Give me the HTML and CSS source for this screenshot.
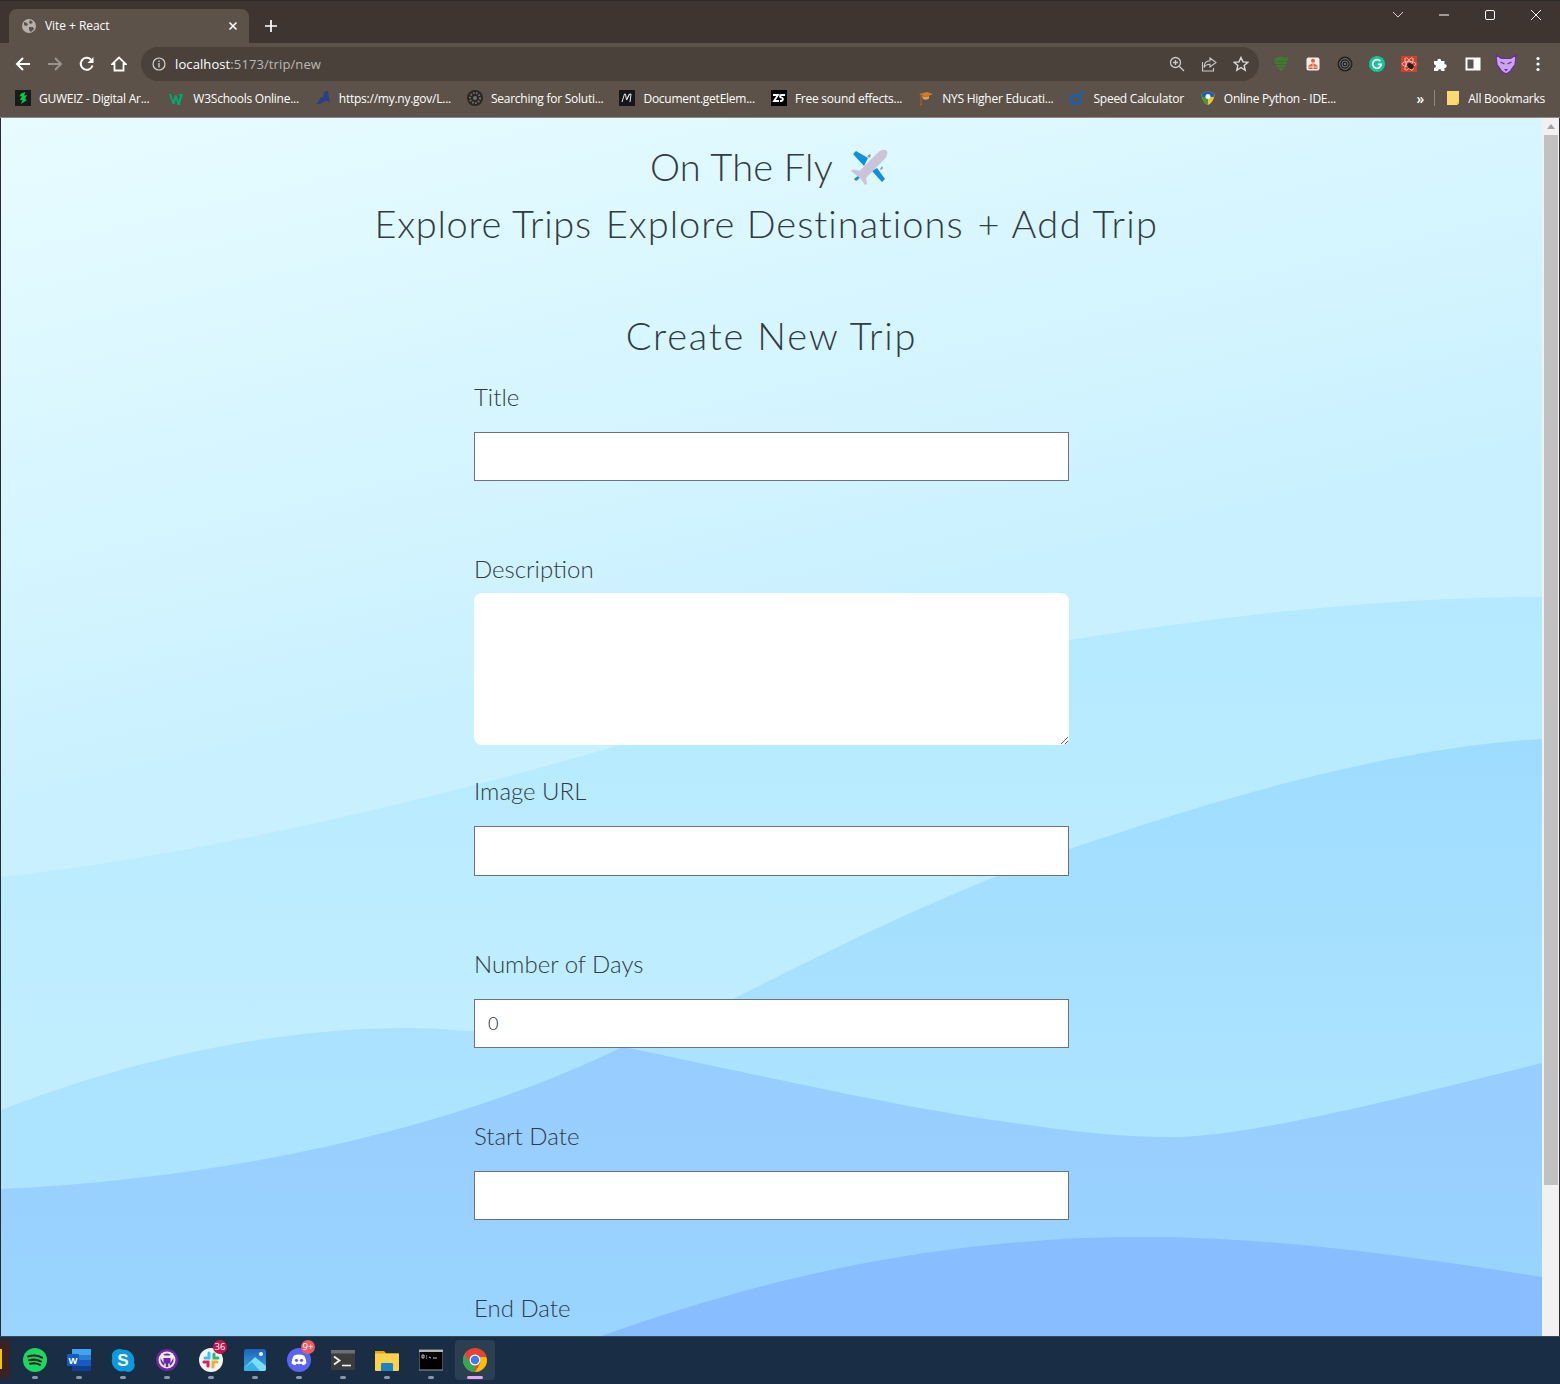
FILE: index.html
```html
<!DOCTYPE html>
<html>
    <head>
        <meta charset="utf-8"/>
        <title>Vite + React</title>
        <link rel="stylesheet" href="styles.css">
    </head>
    <body>
        <div class="window">
          <div class="titlebar">
            <div class="tab">
              <svg class="tab-icon" viewBox="0 0 14 14"><circle cx="7" cy="7" r="7" fill="#b5b0ab"/><path d="M2 3l3 1 1 2-2 1-2-1zM8 1l3 2-2 2-2-1zM7 8l4 0 1 2-3 3-2-2z" fill="#5c5249"/></svg>
              <span class="tab-title">Vite + React</span>
              <svg class="tab-close" viewBox="0 0 10 10"><path d="M1.5 1.5l7 7M8.5 1.5l-7 7" stroke="#fff" stroke-width="1.6"/></svg>
            </div>
            <svg class="new-tab" viewBox="0 0 12 12"><path d="M6 0v12M0 6h12" stroke="#fff" stroke-width="1.7"/></svg>
            <div class="window-controls">
              <svg class="win-btn win-chevron" viewBox="0 0 12 12"><path d="M1 3l5 5 5-5" fill="none" stroke="#d5d2cf" stroke-width="1"/></svg>
              <svg class="win-btn win-min" viewBox="0 0 12 12"><path d="M1 6h10" stroke="#fff" stroke-width="1"/></svg>
              <svg class="win-btn win-max" viewBox="0 0 12 12"><rect x="1.5" y="1.5" width="9" height="9" rx="1.5" fill="none" stroke="#fff"/></svg>
              <svg class="win-btn win-close" viewBox="0 0 12 12"><path d="M1 1l10 10M11 1L1 11" stroke="#fff" stroke-width="1"/></svg>
            </div>
          </div>

          <div class="toolbar">
            <svg class="nav-icon" viewBox="0 0 16 16"><path d="M15 8H2M8 2L2 8l6 6" fill="none" stroke="#fff" stroke-width="2"/></svg>
            <svg class="nav-icon" viewBox="0 0 16 16"><path d="M1 8h13M8 2l6 6-6 6" fill="none" stroke="#9a948e" stroke-width="2"/></svg>
            <svg class="nav-icon" viewBox="0 0 16 16"><path d="M13.5 9.5A6 6 0 1 1 12 3.6" fill="none" stroke="#fff" stroke-width="2"/><path d="M14.5 1v6h-6z" fill="#fff"/></svg>
            <svg class="nav-icon" viewBox="0 0 16 16"><path d="M8 1.5L1.2 8H3.5v6.5h9V8h2.3z" fill="none" stroke="#fff" stroke-width="1.8" stroke-linejoin="miter"/></svg>
            <div class="omnibox">
              <svg class="info-icon" viewBox="0 0 14 14"><circle cx="7" cy="7" r="6" fill="none" stroke="#d8d5d2" stroke-width="1.2"/><path d="M7 6v4.5M7 3.4v1.5" stroke="#d8d5d2" stroke-width="1.3"/></svg>
              <span class="url"><span class="url-host">localhost</span>:5173/trip/new</span>
              <svg class="omni-icon" viewBox="0 0 16 16"><circle cx="6.5" cy="6.5" r="5" fill="none" stroke="#cfcac6" stroke-width="1.3"/><path d="M10.2 10.2L15 15M4 6.5h5M6.5 4v5" stroke="#cfcac6" stroke-width="1.3"/></svg>
              <svg class="omni-icon" viewBox="0 0 16 16"><path d="M9 2l6 4.5L9 11V8.2C6 8.2 4 9.300 3 11.500 3 7.500 5 5 9 4.800z" fill="none" stroke="#cfcac6" stroke-width="1.1"/><path d="M1.500 6v9h11v-3" fill="none" stroke="#cfcac6" stroke-width="1.100"/></svg>
              <svg class="omni-icon" viewBox="0 0 16 16"><path d="M8 1.500l2 4.400 4.700.5-3.500 3.200 1 4.700L8 11.500l-4.200 2.800 1-4.700L1.300 6.400 6 5.900z" fill="none" stroke="#dedad7" stroke-width="1.400"/></svg>
            </div>
            <div class="extensions">
              <svg class="ext" viewBox="0 0 16 16"><path d="M1 2c4-1.500 10-1.500 14 0-.5 6-3 10.500-7 13C4 12.500 1.500 8 1 2z" fill="#3f7a2e"/><path d="M1 5.500h14M2 8.500h12M3.500 11.500h9" stroke="#5c5249" stroke-width=".8"/></svg>
              <svg class="ext" viewBox="0 0 16 16"><rect x="1.500" y="1.500" width="13" height="13" rx="2" fill="#f5efea"/><circle cx="8" cy="4.800" r="2" fill="#e8603c"/><path d="M3.500 13V9.500L8 7l4.500 2.500V13z" fill="#e8603c"/><path d="M8 7v6M3.500 11h9" stroke="#f5efea" stroke-width=".8"/></svg>
              <svg class="ext" viewBox="0 0 16 16"><circle cx="8" cy="8" r="7.500" fill="#222"/><circle cx="8" cy="8" r="5.300" fill="none" stroke="#8a8a8a" stroke-width=".8"/><circle cx="8" cy="8" r="3" fill="none" stroke="#8a8a8a" stroke-width=".8"/><circle cx="8" cy="8" r="1" fill="#8a8a8a"/></svg>
              <svg class="ext" viewBox="0 0 16 16"><circle cx="8" cy="8" r="8" fill="#15c39a"/><path d="M11.300 5.200A4.300 4.300 0 1 0 12.300 8.300H8.800" fill="none" stroke="#fff" stroke-width="1.700"/></svg>
              <svg class="ext" viewBox="0 0 16 16"><rect width="16" height="16" fill="#d0402f"/><ellipse cx="8" cy="8" rx="7" ry="2.500" fill="none" stroke="#f5c9c0" stroke-width=".8" transform="rotate(60 8 8)"/><ellipse cx="8" cy="8" rx="7" ry="2.500" fill="none" stroke="#f5c9c0" stroke-width=".8" transform="rotate(-60 8 8)"/><ellipse cx="8" cy="8" rx="7" ry="2.500" fill="none" stroke="#f5c9c0" stroke-width=".8"/><ellipse cx="9.500" cy="10" rx="3.500" ry="2.600" fill="#2b1c18" transform="rotate(35 9.500 10)"/></svg>
              <svg class="ext" viewBox="0 0 16 16"><path d="M1 5h3.500c-.8-3 4.300-3 3.500 0H11.500v3.400c3-.8 3 4.300 0 3.500V15H8.300c.8-2.500-3.900-2.500-3.100 0H1v-3.300c2.500.8 2.500-3.900 0-3.100z" fill="#fff"/></svg>
              <svg class="ext" viewBox="0 0 16 16"><rect x=".500" y="1.500" width="15" height="13" fill="#fff"/><rect x="2.500" y="3.500" width="6" height="9" fill="#5c5249"/></svg>
              <svg class="ext ext-wolf" viewBox="0 0 22 22"><path d="M1 2l5.500 3.500h9L21 2l-1 9.500-5 7-4 2.500-4-2.500-5-7z" fill="#c9a6ea" stroke="#6a2aa8" stroke-width="1.200" stroke-linejoin="round"/><path d="M5.500 9l4 2M16.500 9l-4 2" stroke="#6a2aa8" stroke-width="1.300"/><path d="M9 16h4l-2 2.500z" fill="#6a2aa8"/></svg>
              <svg class="ext" viewBox="0 0 16 16"><circle cx="8" cy="2.500" r="1.600" fill="#fff"/><circle cx="8" cy="8" r="1.600" fill="#fff"/><circle cx="8" cy="13.500" r="1.600" fill="#fff"/></svg>
            </div>
          </div>

          <div class="bookmarks">
            <a class="bookmark">
              <svg class="bm-icon" viewBox="0 0 16 16"><rect width="16" height="16" fill="#1a1a1a"/><path d="M10.500 2L9 5.500 12 5 10 9l2 1-6 4 1.500-4L5 10l2-4-2.500.5L6 3.500z" fill="#05cc47"/></svg>
              <span class="bm-text">GUWEIZ - Digital Ar...</span>
            </a>
            <a class="bookmark">
              <svg class="bm-icon" viewBox="0 0 16 16"><path d="M0 4l2 0 2 7 2-6 1.500 0 2 6 1.500-5-2-2h5l-3.500 11h-2L7 9l-1.500 5h-2z" fill="#04aa6d"/></svg>
              <span class="bm-text">W3Schools Online...</span>
            </a>
            <a class="bookmark">
              <svg class="bm-icon" viewBox="0 0 16 16"><path d="M11 1l2 0 1 7 1 4-4-1.500L5 14H1l3-3 1-3 3-1 1-4z" fill="#2a3f85"/></svg>
              <span class="bm-text">https://my.ny.gov/L...</span>
            </a>
            <a class="bookmark">
              <svg class="bm-icon" viewBox="0 0 16 16"><circle cx="8" cy="8" r="8" fill="#2a2622"/><circle cx="8" cy="8" r="5" fill="none" stroke="#77716b" stroke-width="2" stroke-dasharray="1.500 1.500"/><circle cx="8" cy="8" r="2" fill="#77716b"/></svg>
              <span class="bm-text">Searching for Soluti...</span>
            </a>
            <a class="bookmark">
              <svg class="bm-icon" viewBox="0 0 16 16"><rect width="16" height="16" fill="#15151a"/><path d="M3 12l2.500-8h1l1 6 3-6h1.500l-1 8M7.500 10l3-6" fill="none" stroke="#e8e8e8" stroke-width="1"/></svg>
              <span class="bm-text">Document.getElem...</span>
            </a>
            <a class="bookmark">
              <svg class="bm-icon" viewBox="0 0 16 16"><rect width="16" height="16" fill="#000"/><path d="M2 5h5L3 11h5M14 5H10.500c-2 0-2 2.700 0 2.700s2 3.300-.5 3.300H9" fill="none" stroke="#fff" stroke-width="1.800"/></svg>
              <span class="bm-text">Free sound effects...</span>
            </a>
            <a class="bookmark">
              <svg class="bm-icon" viewBox="0 0 16 16"><path d="M1 4l8-2 6 2-7 3z" fill="#d07a28"/><path d="M4 6l1 3c2 1 4 1 6-.500V6L8 7z" fill="#d9a05c"/><path d="M3 5v9" stroke="#c25a24" stroke-width="1"/><circle cx="3" cy="14.500" r="1" fill="#c25a24"/></svg>
              <span class="bm-text">NYS Higher Educati...</span>
            </a>
            <a class="bookmark">
              <svg class="bm-icon" viewBox="0 0 16 16"><circle cx="6.500" cy="9.500" r="4.500" fill="none" stroke="#1f5fa8" stroke-width="3.200"/><circle cx="13" cy="3" r="2" fill="#1f5fa8"/></svg>
              <span class="bm-text">Speed Calculator</span>
            </a>
            <a class="bookmark">
              <svg class="bm-icon" viewBox="0 0 16 16"><path d="M8 1l6.500 2.500C14.500 9 12 13 8 15 4 13 1.500 9 1.500 3.500z" fill="#f2c230"/><path d="M8 1L1.500 3.500C1.500 9 4 13 8 15z" fill="#3e9a3a"/><path d="M8 1l6.500 2.500-1 3.500H2.500l-1-3.500z" fill="#1f5fb0"/><circle cx="8" cy="6.500" r="2.500" fill="#f4f4f4"/></svg>
              <span class="bm-text">Online Python - IDE...</span>
            </a>
            <span class="bm-more">»</span>
            <span class="bm-sep"></span>
            <a class="bookmark bookmark-all">
              <svg class="bm-folder" viewBox="0 0 14 16"><path d="M1 1h12v12.500L11 15H1z" fill="#fbd875"/><path d="M11 15v-2.500h2" fill="#e0b245"/></svg>
              <span class="bm-text">All Bookmarks</span>
            </a>
          </div>

          <div class="viewport">
            <div class="page">
              <svg class="waves" viewBox="0 118 1542 1218" preserveAspectRatio="none">
                <defs>
                  <linearGradient id="skyFill" x1="0" y1="0" x2="0.3" y2="1">
                    <stop offset="0" stop-color="#e8fcff"/>
                    <stop offset="0.55" stop-color="#c8f0ff"/>
                  </linearGradient>
                  <linearGradient id="wave1Fill" x1="0" y1="0" x2="0" y2="1">
                    <stop offset="0" stop-color="#b4e9ff"/>
                    <stop offset="0.6" stop-color="#c0eeff"/>
                  </linearGradient>
                  <linearGradient id="wave2Fill" x1="0" y1="0" x2="0" y2="1">
                    <stop offset="0" stop-color="#9edcff"/>
                    <stop offset="0.6" stop-color="#ace3ff"/>
                  </linearGradient>
                  <linearGradient id="wave3Fill" x1="0" y1="0" x2="0" y2="1">
                    <stop offset="0" stop-color="#98ccff"/>
                    <stop offset="1" stop-color="#99d5ff"/>
                  </linearGradient>
                </defs>
                <rect x="0" y="118" width="1542" height="1218" fill="url(#skyFill)"/>
                <path d="M0 877C200 855 430 800 620 745C800 697 1000 650 1069 640C1250 612 1400 597 1542 597V1336H0Z" fill="url(#wave1Fill)"/>
                <path d="M0 1110C130 1060 270 1028 408 1028C500 1028 620 1060 732 999C830 950 950 890 1069 849C1230 795 1390 748 1542 739V1336H0Z" fill="url(#wave2Fill)"/>
                <path d="M0 1189C230 1178 450 1130 622 1047C680 1058 900 1108 1000 1121C1060 1130 1110 1137 1171 1137C1250 1137 1400 1098 1542 1063V1336H0Z" fill="url(#wave3Fill)"/>
                <path d="M590 1340C780 1270 960 1237 1143 1237C1280 1237 1420 1258 1542 1277V1340Z" fill="#88bdff"/>
              </svg>

              <div class="content">
                <div class="brand">
                  <span class="brand-name">On The Fly</span>
                  <svg class="plane" viewBox="0 0 38 38">
                    <path d="M18 10L6 3 3 6l11 12zM27 20l8 11-3 3-10-11z" fill="#0f8fdc"/>
                    <path d="M17 8l3-2 1 2-2 2zM30 21l2-3 1 2-2 2z" fill="#9b97a8"/>
                    <path d="M4 31l5-4 2 2-5 4z" fill="#0f8fdc"/>
                    <path d="M29 3.500c2.500-2 6-2.500 7.500-1s1 5-1 7.500L16 30l1 6-2 1-4-6-10-8 1.500-1.500 7.500 1z" fill="#cbc4d8"/>
                  </svg>
                </div>
                <nav class="main-nav">
                  <a>Explore Trips</a>
                  <a>Explore Destinations</a>
                  <a>+ Add Trip</a>
                </nav>

                <h2 class="form-title">Create New Trip</h2>
                <form class="trip-form">
                  <label class="field-label" for="title">Title</label>
                  <input class="field-input" type="text" id="title">

                  <label class="field-label" for="description">Description</label>
                  <textarea class="field-area" id="description"></textarea>

                  <label class="field-label" for="img">Image URL</label>
                  <input class="field-input" type="text" id="img">

                  <label class="field-label" for="days">Number of Days</label>
                  <input class="field-input" type="text" id="days" value="0">

                  <label class="field-label" for="start">Start Date</label>
                  <input class="field-input" type="text" id="start">

                  <label class="field-label" for="end">End Date</label>
                  <input class="field-input" type="text" id="end">
                </form>
              </div>
            </div>
            <div class="scrollbar">
              <span class="scroll-arrow"></span>
              <span class="scroll-thumb"></span>
            </div>
          </div>

          <div class="taskbar">
            <div class="task-peek"><span class="task-peek-mark"></span></div>
            <div class="task">
              <svg class="task-icon" viewBox="0 0 24 24"><circle cx="12" cy="12" r="12" fill="#1ed760"/><path d="M5 8.500c5-1.500 10-1 14 1.200M6 12.300c4.500-1.200 8.500-.8 12 1.200M7 15.800c3.500-1 7-.7 10 1" fill="none" stroke="#14261c" stroke-width="2" stroke-linecap="round"/></svg>
            </div>
            <div class="task">
              <svg class="task-icon" viewBox="0 0 24 24"><rect x="5" y="1" width="19" height="22" rx="1.500" fill="#2b7cd3"/><rect x="5" y="1" width="19" height="6" fill="#41a5ee"/><rect x="5" y="12" width="19" height="6" fill="#185abd"/><rect x="5" y="18" width="19" height="5" fill="#103f91"/><rect x="0" y="6" width="12" height="12" rx="1" fill="#185abd"/><text x="6" y="15.500" class="word-letter">W</text></svg>
            </div>
            <div class="task">
              <svg class="task-icon" viewBox="0 0 24 24"><path d="M8 1a7 7 0 0 1 4 .800A10.500 10.500 0 0 1 23 14.500 6.500 6.500 0 0 1 14 23 10.500 10.500 0 0 1 1.200 10 7 7 0 0 1 8 1z" fill="#0b9ade"/><text x="12" y="18" class="skype-letter">S</text></svg>
            </div>
            <div class="task">
              <svg class="task-icon" viewBox="0 0 24 24"><circle cx="12" cy="12" r="11" fill="#6a2ca0"/><circle cx="12" cy="12" r="7.500" fill="none" stroke="#f0e8f6" stroke-width="2"/><path d="M6.500 5l3 2.500h5l3-2.500 1 5-3 5h-7l-3-5z" fill="#f0e8f6"/><path d="M8.500 10h7v5l-1.500 4h-4l-1.500-4z" fill="#6a2ca0"/><path d="M10 15.500v4M14 15.500v4" stroke="#f0e8f6" stroke-width="1.500"/></svg>
            </div>
            <div class="task">
              <svg class="task-icon" viewBox="0 0 24 24"><circle cx="12" cy="12" r="12" fill="#f4f4f4"/><path d="M10 5v5H6" fill="none" stroke="#36c5f0" stroke-width="3" stroke-linecap="round"/><path d="M19 10h-4V6" fill="none" stroke="#2eb67d" stroke-width="3" stroke-linecap="round"/><path d="M14 19v-5h4" fill="none" stroke="#ecb22e" stroke-width="3" stroke-linecap="round"/><path d="M5 14h4v4" fill="none" stroke="#e01e5a" stroke-width="3" stroke-linecap="round"/></svg>
              <span class="task-badge badge-slack">36</span>
            </div>
            <div class="task">
              <svg class="task-icon" viewBox="0 0 24 24"><defs><linearGradient id="photoSky" x1="0" y1="0" x2="0" y2="1"><stop offset="0" stop-color="#1c63b8"/><stop offset="1" stop-color="#3fa6e8"/></linearGradient></defs><rect x="1" y="1" width="22" height="22" rx="2.500" fill="url(#photoSky)"/><path d="M1 20l11-11 11 9v3a2 2 0 0 1-2 2H3a2 2 0 0 1-2-2z" fill="#7fdcf5"/><path d="M1 20l8-6 8 9H3a2 2 0 0 1-2-2z" fill="#2fb4e9"/><circle cx="18" cy="6" r="2" fill="#f3fbff"/></svg>
            </div>
            <div class="task">
              <svg class="task-icon" viewBox="0 0 24 24"><circle cx="12" cy="12" r="12" fill="#5865f2"/><path d="M7 7.500c3.200-1.300 6.800-1.300 10 0 1.700 2.700 2.400 5.300 2.300 8-1.300 1-2.600 1.500-3.700 1.800l-.9-1.500c-2 .6-3.400.6-5.400 0l-.9 1.500c-1.100-.3-2.400-.8-3.700-1.800-.1-2.700.6-5.300 2.300-8z" fill="#fff"/><circle cx="9.500" cy="12.300" r="1.600" fill="#5865f2"/><circle cx="14.500" cy="12.300" r="1.600" fill="#5865f2"/></svg>
              <span class="task-badge badge-discord">9+</span>
            </div>
            <div class="task">
              <svg class="task-icon" viewBox="0 0 24 24"><rect y="2" width="24" height="20" rx="1.500" fill="#3c3c3c"/><rect y="2" width="24" height="3.500" fill="#6e6e6e"/><path d="M3 8.500l5.500 4L3 16.500" fill="none" stroke="#f2f2f2" stroke-width="1.800"/><path d="M11 17.500h9" stroke="#f2f2f2" stroke-width="1.600"/></svg>
            </div>
            <div class="task">
              <svg class="task-icon" viewBox="0 0 24 24"><path d="M0 3h9l2.500 2.500H24V8H0z" fill="#e2a80f"/><rect y="5.500" width="24" height="17.500" rx="1" fill="#fbd34a"/><path d="M7 15h10a1 1 0 0 1 1 1v7H6v-7a1 1 0 0 1 1-1z" fill="#1a82c8"/></svg>
            </div>
            <div class="task">
              <svg class="task-icon" viewBox="0 0 24 24"><rect y="2" width="24" height="20" fill="#000" stroke="#9b9b9b"/><rect y="2" width="24" height="2" fill="#b5b5b5"/><path d="M3 7h2v3H3zM7 8h1M7 10h1M10 9l2 1M14 10h4" stroke="#eee" stroke-width=".8" fill="none"/></svg>
            </div>
            <div class="task task-active">
              <svg class="task-icon" viewBox="0 0 24 24"><circle cx="12" cy="12" r="12" fill="#e94235"/><path d="M12 24A12 12 0 0 1 1.600 6l5.200 9 5.200 3z" fill="#34a853"/><path d="M24 12A12 12 0 0 1 12 24l5.200-9L17.200 9H22.900c.7 1 1.100 2 1.100 3z" fill="#fbbc04"/><circle cx="12" cy="12" r="5.500" fill="#fff"/><circle cx="12" cy="12" r="4.300" fill="#3b7ef0"/></svg>
            </div>
          </div>
        </div>
    </body>
</html>
```

FILE: styles.css
```css
* {
  box-sizing: border-box;
}

html, body {
  margin: 0;
  height: 100%;
  overflow: hidden;
}

.window {
  display: flex;
  flex-direction: column;
  width: 1560px;
  height: 1384px;
  font-family: "Open Sans", "Noto Sans", sans-serif;
  color: #fff;
}

/* browser chrome */
.titlebar {
  display: flex;
  align-items: flex-end;
  height: 43px;
  padding-left: 9px;
  background: #3e3530;
  border-top: 1px solid #2c2a2c;
}

.tab {
  display: flex;
  align-items: center;
  width: 240px;
  height: 34px;
  padding: 0 11px 0 13px;
  background: #5c5249;
  border-radius: 8px 8px 0 0;
}

.tab-icon {
  width: 14px;
  height: 14px;
  margin-right: 9px;
}

.tab-title {
  flex: 1;
  padding-bottom: 2px;
  font-size: 12px;
  letter-spacing: -0.05px;
}

.tab-close {
  width: 10px;
  height: 10px;
}

.new-tab {
  width: 12px;
  height: 12px;
  margin: 0 0 11px 16px;
}

.window-controls {
  display: flex;
  align-self: flex-start;
  margin-left: auto;
  padding-top: 8px;
}

.win-btn {
  width: 12px;
  height: 12px;
}

.win-chevron {
  margin-right: 34px;
}

.win-min {
  margin-right: 34px;
}

.win-max {
  margin-right: 34px;
}

.win-close {
  margin-right: 18px;
}

.toolbar {
  display: flex;
  align-items: center;
  height: 38px;
  padding: 4px 0 0 15px;
  background: #5c5249;
}

.nav-icon {
  width: 16px;
  height: 16px;
  margin-right: 16px;
}

.omnibox {
  display: flex;
  align-items: center;
  width: 1118px;
  height: 34px;
  margin-left: -2px;
  padding: 0 10px 0 11px;
  background: #4a413a;
  border-radius: 17px;
}

.info-icon {
  width: 14px;
  height: 14px;
  margin-right: 9px;
}

.url {
  flex: 1;
  font-size: 13px;
  letter-spacing: 0.1px;
  color: #bdb8b3;
}

.url-host {
  color: #fff;
}

.omni-icon {
  width: 16px;
  height: 16px;
  margin-left: 16px;
}

.extensions {
  display: flex;
  align-items: center;
  gap: 16px;
  margin-left: 14px;
}

.ext {
  width: 16px;
  height: 16px;
}

.ext-wolf {
  width: 22px;
  height: 22px;
  margin: 0 -3px 0 -2px;
}

.bookmarks {
  display: flex;
  align-items: center;
  height: 37px;
  padding: 0 0 2px 15px;
  background: #5c5249;
  border-bottom: 1px solid #8d8982;
}

.bookmark {
  display: flex;
  align-items: center;
  gap: 8px;
  margin-right: 16px;
}

.bookmark:first-child {
  margin-right: 20px;
}

.bm-icon {
  width: 16px;
  height: 16px;
  flex: none;
}

.bm-text {
  font-size: 12px;
  letter-spacing: -0.25px;
  white-space: nowrap;
}

.bm-more {
  margin-left: auto;
  font-size: 14px;
  font-weight: 600;
}

.bm-sep {
  width: 1px;
  height: 16px;
  margin: 0 11px 0 10px;
  background: #8d8982;
}

.bm-folder {
  width: 14px;
  height: 16px;
}

.bookmark-all {
  margin-right: 15px;
}

/* page area */
.viewport {
  display: flex;
  flex: 1;
  min-height: 0;
  border-left: 1px solid #2c2a30;
}

.page {
  display: grid;
  flex: 1;
  min-width: 0;
  overflow: hidden;
  color: #303c42;
  font-family: "Lato", "Open Sans", sans-serif;
  font-weight: 300;
}

.waves,
.content {
  grid-area: 1 / 1;
}

.waves {
  display: block;
  width: 100%;
  height: 100%;
}

.content {
  padding-top: 22px;
  height: 1218px;
  overflow: hidden;
}

.brand {
  display: flex;
  align-items: center;
  justify-content: center;
  gap: 17px;
  height: 57px;
  font-size: 38px;
  padding-right: 5px;
}

.brand-name {
  padding-bottom: 5px;
  letter-spacing: 0.2px;
}

.plane {
  width: 38px;
  height: 38px;
  margin-bottom: 4px;
}

.main-nav {
  display: flex;
  justify-content: center;
  gap: 14px;
  height: 57px;
  padding-right: 10px;
  font-size: 38px;
  line-height: 53px;
  letter-spacing: 1px;
}

.main-nav a:first-child {
  letter-spacing: 0.7px;
}

.main-nav a:last-child {
  letter-spacing: 1.4px;
}

.form-title {
  height: 57px;
  margin: 55px 0 18px;
  font-size: 38px;
  font-weight: 300;
  line-height: 53px;
  letter-spacing: 1.8px;
  text-align: center;
}

.trip-form {
  display: flex;
  flex-direction: column;
  width: 595px;
  margin: 0 auto;
}

.field-label {
  height: 29px;
  margin-bottom: 19px;
  font-size: 24px;
  line-height: 25px;
}

.field-input {
  flex: none;
  height: 49.33px;
  margin-bottom: 75px;
  padding: 0 13px;
  background: #fff;
  border: 1px solid #6b7280;
  border-radius: 0;
  font-family: "Lato", "Open Sans", sans-serif;
  font-size: 18px;
  font-weight: 300;
  color: #1c2529;
  outline: none;
}

.field-area {
  flex: none;
  height: 152px;
  margin: -11px 0 33px;
  padding: 8px 13px;
  background: #fff;
  border: none;
  border-radius: 8px;
  outline: none;
}

.scrollbar {
  display: flex;
  flex-direction: column;
  align-items: center;
  width: 18px;
  background: #f1f1f1;
  border-right: 1px solid #2c2a30;
}

.scroll-arrow {
  width: 0;
  height: 0;
  margin-top: 6px;
  border-left: 4.5px solid transparent;
  border-right: 4.5px solid transparent;
  border-bottom: 5px solid #a3a3a3;
}

.scroll-thumb {
  width: 14px;
  height: 1050px;
  margin-top: 6px;
  background: #c1c1c1;
}

/* windows taskbar */
.taskbar {
  display: flex;
  height: 48px;
  padding-right: 13px;
  background: #192d44;
  border-top: 1px solid #3a4754;
}

.task-peek {
  display: flex;
  align-items: center;
  width: 13px;
  height: 38px;
  margin-top: 3px;
  padding-right: 3px;
  background: linear-gradient(#3a2222, #3a2222) no-repeat left / 10px 100%;
}

.task-peek-mark {
  width: 2px;
  height: 20px;
  background: #f5c400;
}

.task {
  position: relative;
  display: flex;
  align-items: center;
  justify-content: center;
  width: 44px;
  height: 47px;
  padding-bottom: 2px;
}

.task::after {
  content: "";
  position: absolute;
  left: 19px;
  bottom: 5px;
  width: 6px;
  height: 3px;
  border-radius: 2px;
  background: #8b97a3;
}

.task-active::before {
  content: "";
  position: absolute;
  left: 2px;
  top: 3px;
  width: 40px;
  height: 40px;
  border-radius: 4px;
  background: #2b3f52;
}

.task-active::after {
  left: 14px;
  width: 16px;
  background: #e2a9ef;
}

.task-icon {
  position: relative;
  width: 24px;
  height: 24px;
}

.word-letter,
.skype-letter {
  fill: #fff;
  font-family: "Liberation Sans", sans-serif;
  font-weight: bold;
  text-anchor: middle;
}

.word-letter {
  font-size: 9.5px;
}

.skype-letter {
  font-size: 17px;
}

.task-badge {
  position: absolute;
  top: 3px;
  left: 24px;
  min-width: 14px;
  height: 14px;
  border-radius: 7px;
  font-family: "Open Sans", sans-serif;
  font-size: 9.5px;
  line-height: 14px;
  text-align: center;
  color: #fff;
}

.badge-slack {
  background: #c4144c;
}

.badge-discord {
  background: #ed5a62;
}
```
